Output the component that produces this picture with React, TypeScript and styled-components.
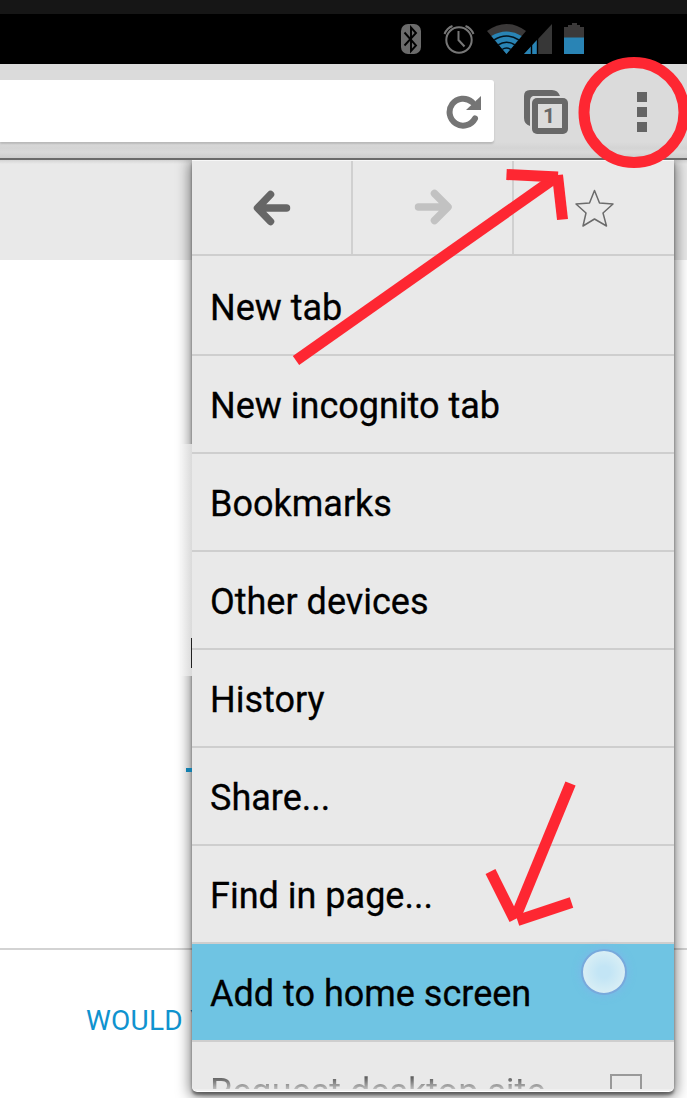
import React from "react";
import styled, { createGlobalStyle } from "styled-components";

const Global = createGlobalStyle`
  body { margin: 0; background: #fff; }
  *, *::before, *::after { box-sizing: border-box; }
`;

const Screen = styled.div`
  position: relative;
  display: flex;
  flex-direction: column;
  width: 687px;
  height: 1098px;
  overflow: hidden;
  background: #fff;
  font-family: Roboto, "Liberation Sans", sans-serif;
`;

const Bezel = styled.div`
  height: 14px;
  background: #161616;
`;

const StatusBar = styled.div`
  display: flex;
  justify-content: flex-end;
  height: 50px;
  padding-right: 97px;
  background: #000;
`;

const Toolbar = styled.header`
  display: flex;
  align-items: flex-start;
  height: 96px;
  padding-top: 16px;
  background: linear-gradient(#dbdbdb 0 78px, #d4d4d4 84px, #dadada 88px, #cdcdcd 94px);
  border-bottom: 2px solid #6b6b6b;
`;

const AddressBar = styled.div`
  display: flex;
  justify-content: flex-end;
  width: 494px;
  height: 62px;
  padding: 14px 10px 0 0;
  background: #fff;
  border-radius: 0 3px 3px 0;
  box-shadow: 0 2px 2px #b9b9b9;
`;

const ToolIcon = styled.svg<{ $gap: number }>`
  flex: none;
  margin: 10px 0 0 ${(p) => p.$gap}px;
`;

const Content = styled.main`
  position: relative;
  flex: 1;
  display: flex;
  flex-direction: column;
  overflow: hidden;
`;

const Hero = styled.div`
  flex: none;
  height: 100px;
  background: linear-gradient(#d4d4d4, #e9e9e9 4px);
`;

const Article = styled.div`
  flex: none;
  height: 690px;
  border-bottom: 2px solid #d3d3d3;
`;

const Prompt = styled.p`
  margin: 0;
  padding: 54px 0 0 86px;
  font-size: 28px;
  line-height: 33px;
  letter-spacing: 0.25px;
  white-space: nowrap;
  color: #0f93cf;
`;

const Peek = styled.span<{ $x: number; $y: number; $w: number; $h: number; $color: string }>`
  position: absolute;
  left: ${(p) => p.$x}px;
  top: ${(p) => p.$y}px;
  width: ${(p) => p.$w}px;
  height: ${(p) => p.$h}px;
  background: ${(p) => p.$color};
`;

const MenuShade = styled.div`
  position: absolute;
  left: 192px;
  top: 0;
  width: 482px;
  height: 932px;
  border-radius: 0 0 5px 5px;
  box-shadow: 0 3px 3px rgba(0, 0, 0, 0.42), 0 3px 14px 2px rgba(0, 0, 0, 0.5);
`;

const Menu = styled.nav`
  position: absolute;
  left: 192px;
  top: 0;
  display: flex;
  flex-direction: column;
  width: 482px;
  height: 931px;
  overflow: hidden;
  background: #e9e9e9;
  border-radius: 0 0 5px 5px;
`;

const Actions = styled.div`
  display: grid;
  grid-template-columns: 161px 161px 160px;
  flex: none;
  height: 96px;
  border-top: 1px solid #f7f7f7;
  border-bottom: 2px solid #cecece;
`;

const Action = styled.div`
  display: flex;
  align-items: center;
  justify-content: center;
  padding-right: 1px;
  & + & { border-left: 2px solid #d0d0d0; margin-left: -2px; padding-right: 0; }
`;

const Item = styled.div<{ $tall?: boolean; $active?: boolean }>`
  display: flex;
  align-items: flex-end;
  flex: none;
  height: ${(p) => (p.$tall ? 100 : 98)}px;
  padding: 0 0 24px 18px;
  font-size: 36px;
  line-height: 43px;
  white-space: nowrap;
  color: #000;
  -webkit-text-stroke: 0.3px currentColor;
  background: ${(p) => (p.$active ? "#6fc4e3" : "transparent")};
  border-bottom: 2px solid #cecece;
`;

const FadedItem = styled(Item)`
  justify-content: space-between;
  padding: 0 32px 26px 18px;
  border-bottom: 0;
  -webkit-text-stroke: 0;
`;

const FadedLabel = styled.span`
  color: transparent;
  background: linear-gradient(#505050 4px, #7a7a7a 10px, #b5b5b5 17px, #dedede 22px) text;
`;

const Checkbox = styled.span`
  width: 32px;
  height: 32px;
  margin-bottom: 8px;
  border: 2px solid #999;
`;

const MenuFoot = styled.div`
  position: absolute;
  left: 0;
  bottom: 0;
  width: 100%;
  height: 2px;
  background: #efefef;
`;

const Touch = styled.div`
  position: absolute;
  left: 581px;
  top: 949px;
  width: 46px;
  height: 46px;
  border: 2px solid #78a9dc;
  border-radius: 50%;
  background: radial-gradient(circle, #c3e5f5 20%, #d8eef5 70%);
  box-shadow: 0 0 6px 2px rgba(125, 183, 233, 0.65);
`;

const Markup = styled.svg`
  position: absolute;
  inset: 0;
`;

const ITEMS = ["New tab", "New incognito tab", "Bookmarks", "Other devices", "History", "Share...", "Find in page...", "Add to home screen"];

const StatusIcons = () => (
  <svg width="190" height="50" viewBox="400 14 190 50" fill="none">
    <rect x="401" y="24" width="20" height="30" rx="7" fill="#6b6b6b" />
    <path d="M404.5 32.5 416 45.5 411 51V27.5L416 33 404.5 45.5" stroke="#000" strokeWidth="1.9" />
    <circle cx="459" cy="40" r="12.7" stroke="#777" strokeWidth="2" />
    <path d="M458.5 31v9l6 6.500M444.500 34q2.500-6 8-8M473.500 34q-2.500-6-8-8" stroke="#777" strokeWidth="2" />
    <path d="M487 31q19.500-14 39 0L506.500 54Z" fill="#3b3939" />
    <path d="M491.300 36q15.200-9 30.400 0L506.500 54Z" fill="#2984b5" />
    <path d="M494 40q12.500-8 25 0M498 45q8.500-5.500 17 0M502 49.500q4.500-3 9 0" stroke="#03131d" strokeWidth="1.500" />
    <path d="M524 54 552 24V54Z" fill="#373737" />
    <path d="M524 54 537 40V54Z" fill="#2984b5" />
    <path d="M531.500 44v10M537.500 36v18" stroke="#000" strokeWidth="1.400" />
    <path d="M564 27h4v-2h4v-2h5v2h3v2h4v11h-20Z" fill="#3b3939" />
    <path d="M564 37.500h20V54h-20Z" fill="#2984b5" />
  </svg>
);

const Annotations = () => (
  <Markup width="687" height="1098" viewBox="0 0 687 1098" fill="none" stroke="#fe2732" strokeWidth="11">
    <circle cx="634" cy="112.500" r="50" />
    <path d="M296 360.500 555 178" />
    <path d="M506.500 174.500 558 177" />
    <path d="M557.500 175 562.500 219.500" />
    <path d="M570.500 783.500 516 916" />
    <path d="M490.500 871.500 514.500 919.500" />
    <path d="M517.500 920.500 571.500 902.500" />
  </Markup>
);

export default function App() {
  return (
    <Screen>
      <Global />
      <Bezel />
      <StatusBar>
        <StatusIcons />
      </StatusBar>
      <Toolbar>
        <AddressBar>
          <svg width="38" height="38" viewBox="446 94 38 38" fill="none">
            <path d="M475 118.500A13.500 13.500 0 1 1 472 102" stroke="#757575" strokeWidth="6" strokeLinecap="round" />
            <path d="M481 96v14h-15Z" fill="#757575" />
          </svg>
        </AddressBar>
        <ToolIcon $gap={30} width="46" height="46" viewBox="524 90 46 46" fill="none">
          <path d="M530 126q-6-2-6-8V96q0-6 6-6h22q6 0 8 6h-27q-3 1-3 5Z" fill="#686868" />
          <rect x="532" y="98" width="36" height="36" rx="5" fill="#686868" />
          <rect x="538" y="104" width="24" height="24" fill="#dbdbdb" />
          <text x="549" y="123" textAnchor="middle" fill="#686868" fontSize="21" fontWeight="700" fontFamily="Roboto, sans-serif">1</text>
        </ToolIcon>
        <ToolIcon $gap={66} width="14" height="46" viewBox="636 90 14 46" fill="#646464">
          <path d="M637 92h10v10h-10ZM637 107h10v10h-10ZM637 122h10v10h-10Z" />
        </ToolIcon>
      </Toolbar>
      <Content>
        <Hero />
        <Article />
        <Prompt>WOULD YOU</Prompt>
        <MenuShade />
        <Peek $x={181} $y={284} $w={11} $h={232} $color="linear-gradient(90deg, #f5f5f5, #dadada)" />
        <Peek $x={191} $y={478} $w={1} $h={30} $color="#222" />
        <Peek $x={186} $y={608} $w={6} $h={4} $color="#137fae" />
        <Menu>
          <Actions>
            <Action>
              <svg width="40" height="40" viewBox="252 188 40 40" fill="none" stroke="#666" strokeWidth="7.500" strokeLinecap="round" strokeLinejoin="round">
                <path d="M270.500 194.500 257.500 208 270.500 221.500M258 208H286.500" />
              </svg>
            </Action>
            <Action>
              <svg width="40" height="40" viewBox="414 188 40 40" fill="none" stroke="#c2c2c2" strokeWidth="7.500" strokeLinecap="round" strokeLinejoin="round">
                <path d="M434.500 193.500 448 207 434.500 220.500M418.500 207H447" />
              </svg>
            </Action>
            <Action>
              <svg width="40" height="40" viewBox="574 188 40 40" fill="none" stroke="#6b6b6b" strokeWidth="1.500" strokeLinejoin="round">
                <path d="M594.500 190.500 599.500 203 613 204 603 213 606.500 226 594.500 219 583 226 586 213 576 204 589.500 203Z" />
              </svg>
            </Action>
          </Actions>
          {ITEMS.map((label, i) => (
            <Item key={label} $tall={i === 0} $active={i === ITEMS.length - 1}>
              {label}
            </Item>
          ))}
          <FadedItem>
            <FadedLabel>Request desktop site</FadedLabel>
            <Checkbox />
          </FadedItem>
          <MenuFoot />
        </Menu>
      </Content>
      <Touch />
      <Annotations />
    </Screen>
  );
}
